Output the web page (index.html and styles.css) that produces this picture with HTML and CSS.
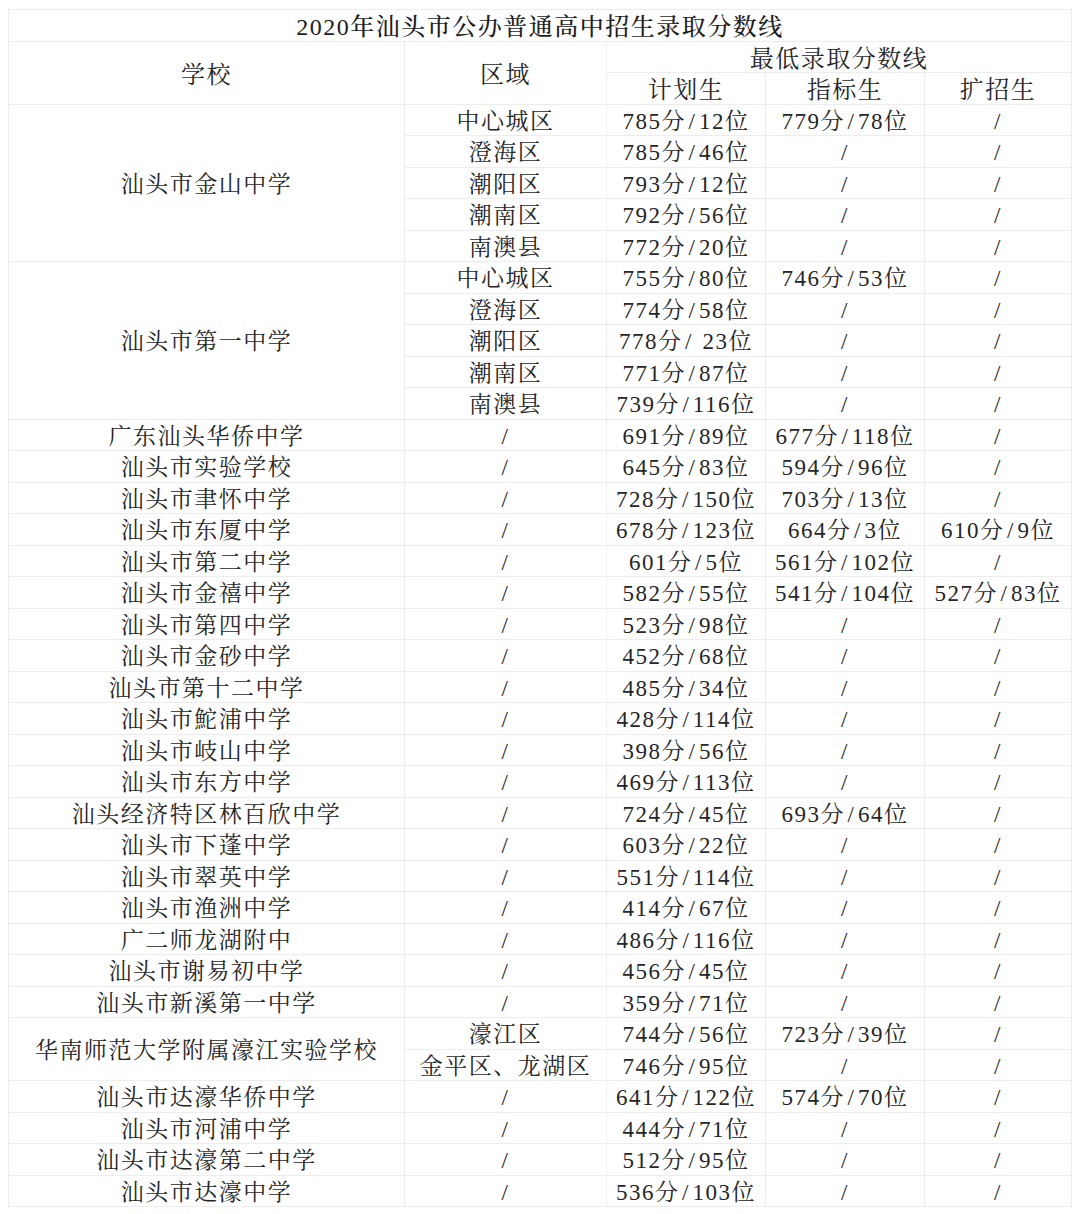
FILE: index.html
```html
<!DOCTYPE html>
<html lang="zh-CN">
<head>
<meta charset="utf-8">
<title>2020年汕头市公办普通高中招生录取分数线</title>
<link rel="stylesheet" href="styles.css">
</head>
<body>
<table class="scores">
  <colgroup>
    <col class="c-school"><col class="c-area"><col class="c-plan"><col class="c-quota"><col class="c-ext">
  </colgroup>
  <thead>
    <tr><th colspan="5" class="title">2020年汕头市公办普通高中招生录取分数线</th></tr>
    <tr><th rowspan="2">学校</th><th rowspan="2">区域</th><th colspan="3">最低录取分数线</th></tr>
    <tr><th>计划生</th><th>指标生</th><th>扩招生</th></tr>
  </thead>
  <tbody>
    <tr><td rowspan="5">汕头市金山中学</td><td>中心城区</td><td>785分<span class="sl">/</span>12位</td><td>779分<span class="sl">/</span>78位</td><td>/</td></tr>
    <tr><td>澄海区</td><td>785分<span class="sl">/</span>46位</td><td>/</td><td>/</td></tr>
    <tr><td>潮阳区</td><td>793分<span class="sl">/</span>12位</td><td>/</td><td>/</td></tr>
    <tr><td>潮南区</td><td>792分<span class="sl">/</span>56位</td><td>/</td><td>/</td></tr>
    <tr><td>南澳县</td><td>772分<span class="sl">/</span>20位</td><td>/</td><td>/</td></tr>
    <tr><td rowspan="5">汕头市第一中学</td><td>中心城区</td><td>755分<span class="sl">/</span>80位</td><td>746分<span class="sl">/</span>53位</td><td>/</td></tr>
    <tr><td>澄海区</td><td>774分<span class="sl">/</span>58位</td><td>/</td><td>/</td></tr>
    <tr><td>潮阳区</td><td class="pre">778分<span class="sl">/</span> 23位</td><td>/</td><td>/</td></tr>
    <tr><td>潮南区</td><td>771分<span class="sl">/</span>87位</td><td>/</td><td>/</td></tr>
    <tr><td>南澳县</td><td>739分<span class="sl">/</span>116位</td><td>/</td><td>/</td></tr>
    <tr><td>广东汕头华侨中学</td><td>/</td><td>691分<span class="sl">/</span>89位</td><td>677分<span class="sl">/</span>118位</td><td>/</td></tr>
    <tr><td>汕头市实验学校</td><td>/</td><td>645分<span class="sl">/</span>83位</td><td>594分<span class="sl">/</span>96位</td><td>/</td></tr>
    <tr><td>汕头市聿怀中学</td><td>/</td><td>728分<span class="sl">/</span>150位</td><td>703分<span class="sl">/</span>13位</td><td>/</td></tr>
    <tr><td>汕头市东厦中学</td><td>/</td><td>678分<span class="sl">/</span>123位</td><td>664分<span class="sl">/</span>3位</td><td>610分<span class="sl">/</span>9位</td></tr>
    <tr><td>汕头市第二中学</td><td>/</td><td>601分<span class="sl">/</span>5位</td><td>561分<span class="sl">/</span>102位</td><td>/</td></tr>
    <tr><td>汕头市金禧中学</td><td>/</td><td>582分<span class="sl">/</span>55位</td><td>541分<span class="sl">/</span>104位</td><td>527分<span class="sl">/</span>83位</td></tr>
    <tr><td>汕头市第四中学</td><td>/</td><td>523分<span class="sl">/</span>98位</td><td>/</td><td>/</td></tr>
    <tr><td>汕头市金砂中学</td><td>/</td><td>452分<span class="sl">/</span>68位</td><td>/</td><td>/</td></tr>
    <tr><td>汕头市第十二中学</td><td>/</td><td>485分<span class="sl">/</span>34位</td><td>/</td><td>/</td></tr>
    <tr><td>汕头市鮀浦中学</td><td>/</td><td>428分<span class="sl">/</span>114位</td><td>/</td><td>/</td></tr>
    <tr><td>汕头市岐山中学</td><td>/</td><td>398分<span class="sl">/</span>56位</td><td>/</td><td>/</td></tr>
    <tr><td>汕头市东方中学</td><td>/</td><td>469分<span class="sl">/</span>113位</td><td>/</td><td>/</td></tr>
    <tr><td>汕头经济特区林百欣中学</td><td>/</td><td>724分<span class="sl">/</span>45位</td><td>693分<span class="sl">/</span>64位</td><td>/</td></tr>
    <tr><td>汕头市下蓬中学</td><td>/</td><td>603分<span class="sl">/</span>22位</td><td>/</td><td>/</td></tr>
    <tr><td>汕头市翠英中学</td><td>/</td><td>551分<span class="sl">/</span>114位</td><td>/</td><td>/</td></tr>
    <tr><td>汕头市渔洲中学</td><td>/</td><td>414分<span class="sl">/</span>67位</td><td>/</td><td>/</td></tr>
    <tr><td>广二师龙湖附中</td><td>/</td><td>486分<span class="sl">/</span>116位</td><td>/</td><td>/</td></tr>
    <tr><td>汕头市谢易初中学</td><td>/</td><td>456分<span class="sl">/</span>45位</td><td>/</td><td>/</td></tr>
    <tr><td>汕头市新溪第一中学</td><td>/</td><td>359分<span class="sl">/</span>71位</td><td>/</td><td>/</td></tr>
    <tr><td rowspan="2">华南师范大学附属濠江实验学校</td><td>濠江区</td><td>744分<span class="sl">/</span>56位</td><td>723分<span class="sl">/</span>39位</td><td>/</td></tr>
    <tr><td>金平区、龙湖区</td><td>746分<span class="sl">/</span>95位</td><td>/</td><td>/</td></tr>
    <tr><td>汕头市达濠华侨中学</td><td>/</td><td>641分<span class="sl">/</span>122位</td><td>574分<span class="sl">/</span>70位</td><td>/</td></tr>
    <tr><td>汕头市河浦中学</td><td>/</td><td>444分<span class="sl">/</span>71位</td><td>/</td><td>/</td></tr>
    <tr><td>汕头市达濠第二中学</td><td>/</td><td>512分<span class="sl">/</span>95位</td><td>/</td><td>/</td></tr>
    <tr><td>汕头市达濠中学</td><td>/</td><td>536分<span class="sl">/</span>103位</td><td>/</td><td>/</td></tr>
  </tbody>
</table>
</body>
</html>
```
FILE: styles.css
```css
html, body {
  margin: 0;
  padding: 0;
  background: #ffffff;
}

body {
  padding: 9px 0 0 8px;
  font-family: "Liberation Serif", "Noto Serif CJK SC", "Noto Sans CJK SC", serif;
  color: #262626;
}

.scores {
  border-collapse: collapse;
  table-layout: fixed;
  width: 1063px;
  border: 1px solid #e6e6e6;
}

.c-school { width: 396px; }
.c-area { width: 202px; }
.c-plan { width: 159px; }
.c-quota { width: 159px; }
.c-ext { width: 147px; }

.scores tr {
  height: 31.5px;
}

.scores th,
.scores td {
  border: 1px solid #ededed;
  padding: 4px 0 0;
  font-size: 23px;
  line-height: 26px;
  letter-spacing: 1.5px;
  font-weight: normal;
  text-align: center;
  vertical-align: middle;
  white-space: nowrap;
  overflow: hidden;
}

.scores th {
  font-size: 24px;
}

.scores .title {
  font-weight: 500;
  color: #1e1e1e;
}

.scores .pre {
  white-space: pre;
}

.sl {
  margin: 0 2.5px;
}
```
